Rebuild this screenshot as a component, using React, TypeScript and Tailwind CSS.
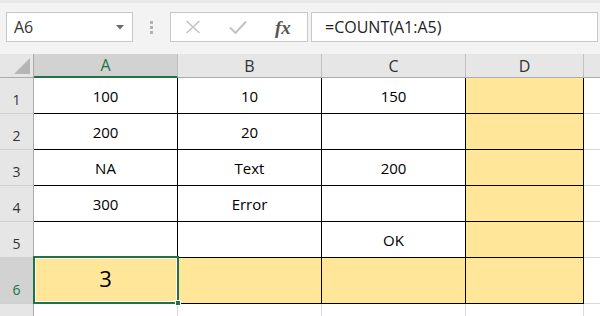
import React from "react";

const rows: string[][] = [
  ["100", "10", "150"],
  ["200", "20", ""],
  ["NA", "Text", "200"],
  ["300", "Error", ""],
  ["", "", "OK"],
];

const F = "font-['Open_Sans','Noto_Sans',sans-serif]";

function TopBar() {
  return (
    <div className="h-[54px] bg-[#f3f3f3] border-t-[3px] border-[#e8e8e8] flex items-start pt-[9px]">
      <div className="ml-[6px] w-[127px] h-[30px] bg-white border border-[#c8c8c8] flex items-center justify-between pl-[7px] pr-[8px]">
        <span className={`${F} text-[16px] text-[#333]`}>A6</span>
        <svg width="8" height="5" viewBox="0 0 8 5"><path d="M0 0h8L4 4.5z" fill="#6a6a6a" /></svg>
      </div>
      <div className="w-[37px] h-[30px] flex flex-col items-center justify-center gap-[2px]">
        <span className="w-[3px] h-[3px] bg-[#b3b3b3]" />
        <span className="w-[3px] h-[3px] bg-[#b3b3b3]" />
        <span className="w-[3px] h-[3px] bg-[#b3b3b3]" />
      </div>
      <div className="w-[138px] h-[30px] bg-white border border-[#c8c8c8] flex items-center pl-[14px] gap-[28px]">
        <svg width="16" height="14" viewBox="0 0 16 14"><path d="M1.5 1L14.5 13M14.5 1L1.5 13" stroke="#c3c3c3" strokeWidth="1.6" fill="none" /></svg>
        <svg width="18" height="14" viewBox="0 0 18 14"><path d="M1 7.5L6.5 13L17 1.5" stroke="#c3c3c3" strokeWidth="2" fill="none" /></svg>
        <span className="font-['Liberation_Serif',serif] italic font-bold text-[19px] text-[#555] leading-none">fx</span>
      </div>
      <div className="ml-[3px] w-[287px] h-[30px] bg-white border border-[#c8c8c8] flex items-center pl-[13px]">
        <span className={`${F} text-[16px] text-[#222]`}>=COUNT(A1:A5)</span>
      </div>
    </div>
  );
}

function Header() {
  const cols = [
    { l: "A", w: "w-[144px]", sel: true },
    { l: "B", w: "w-[144px]", sel: false },
    { l: "C", w: "w-[144px]", sel: false },
    { l: "D", w: "w-[118px]", sel: false },
  ];
  return (
    <div className="flex h-[24px] bg-[#e6e6e6]">
      <div className="w-[34px] h-full border-r border-b border-[#ababab] flex items-end justify-end pr-[3px] pb-[3px]">
        <svg width="16" height="16" viewBox="0 0 16 16"><path d="M16 0V16H0z" fill="#b5b5b5" /></svg>
      </div>
      {cols.map((c) => (
        <div
          key={c.l}
          className={`${c.w} h-full border-r flex items-center justify-center ${F} text-[16px] ${
            c.sel
              ? "bg-[#d2d2d2] text-[#217346] border-b-2 border-b-[#217346] border-r-[#c0c0c0]"
              : "text-[#333] border-b border-b-[#ababab] border-r-[#c0c0c0]"
          }`}
        >
          {c.l}
        </div>
      ))}
      <div className="flex-1 h-full border-b border-[#ababab]" />
    </div>
  );
}

function RowHead({ n, sel, h }: { n: number; sel?: boolean; h: string }) {
  return (
    <div
      className={`w-[34px] ${h} border-r border-r-[#ababab] border-b border-b-[#d0d0d0] flex items-end justify-center pb-[3px] ${F} text-[14px] ${
        sel ? "bg-[#d2d2d2] text-[#217346]" : "bg-[#e6e6e6] text-[#333]"
      }`}
    >
      {n}
    </div>
  );
}

export default function App() {
  return (
    <div className="w-[600px] h-[316px] overflow-hidden bg-white">
      <TopBar />
      <Header />
      {rows.map((r, i) => (
        <div key={i} className="flex h-[36px]">
          <RowHead n={i + 1} h="h-[36px]" />
          {r.map((v, j) => (
            <div
              key={j}
              className={`w-[144px] h-full border-r border-b border-black flex items-end justify-center pb-[6px] ${F} text-[15px] text-black`}
            >
              {v}
            </div>
          ))}
          <div className="w-[118px] h-full border-r border-b border-black bg-[#ffe699]" />
          <div className="flex-1 h-full border-b border-[#d9d9d9]" />
        </div>
      ))}
      <div className="flex h-[46px]">
        <RowHead n={6} sel h="h-[46px]" />
        <div className={`relative w-[144px] h-full border-r border-b border-black bg-[#ffe699] flex items-end justify-center pb-[8px] ${F} text-[22px] text-black`}>
          3
          <div className="absolute top-[-2px] left-[-1px] right-[-2px] bottom-[-1px] border-2 border-[#217346] shadow-[inset_0_0_0_1px_white]" />
          <div className="absolute right-[-4px] bottom-[-3px] w-[6px] h-[6px] bg-[#217346] border border-white" />
        </div>
        <div className="w-[144px] h-full border-r border-b border-black bg-[#ffe699]" />
        <div className="w-[144px] h-full border-r border-b border-black bg-[#ffe699]" />
        <div className="w-[118px] h-full border-r border-b border-black bg-[#ffe699]" />
        <div className="flex-1 h-full border-b border-[#d9d9d9]" />
      </div>
      <div className="flex h-[20px]">
        <div className="w-[34px] h-full border-r border-[#ababab] bg-[#e6e6e6]" />
        <div className="w-[144px] h-full border-r border-[#d9d9d9]" />
        <div className="w-[144px] h-full border-r border-[#d9d9d9]" />
        <div className="w-[144px] h-full border-r border-[#d9d9d9]" />
        <div className="w-[118px] h-full border-r border-[#d9d9d9]" />
        <div className="flex-1" />
      </div>
    </div>
  );
}
